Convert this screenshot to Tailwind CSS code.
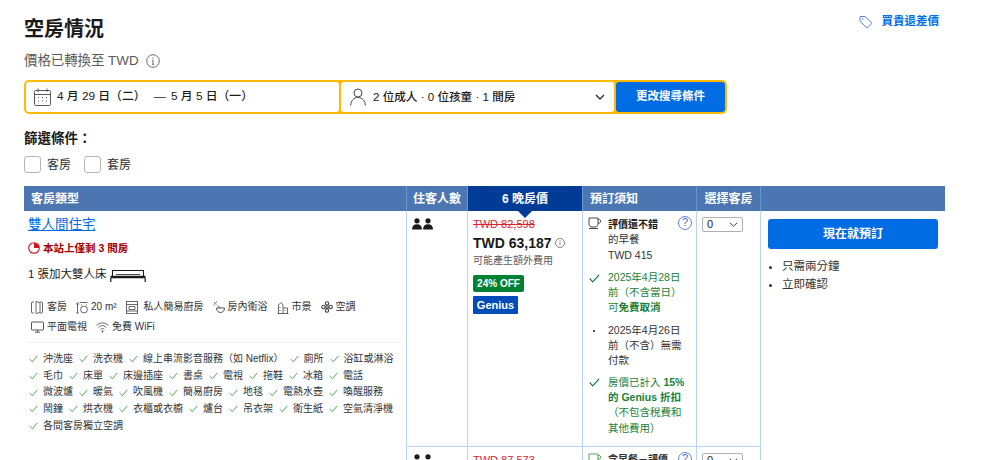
<!DOCTYPE html>
<html lang="zh-Hant">
<head>
  <meta charset="UTF-8" />
  <title>空房情況</title>
  <script src="https://cdn.jsdelivr.net/npm/@tailwindcss/browser@4"></script>
</head>
<body class="bg-white h-[460px] overflow-hidden text-[#1a1a1a] font-['Liberation_Sans','Noto_Sans_CJK_TC',sans-serif]">
  <main class="w-[921px] ml-6">

    <!-- heading -->
    <div class="flex justify-between pt-[15px] h-[51px]">
      <h1 class="text-[20px] leading-[28px] font-bold">空房情況</h1>
      <a href="#" class="flex items-center gap-[9px] h-[12px] pr-[6px] pt-[2px] text-[11.5px] font-bold text-[#006ce4]">
        <svg class="w-[14px] h-[14px]" viewBox="0 0 14 14" fill="none" stroke="#5b83d6" stroke-width="1"><path d="M1 1.5h5L13 8.2 8.2 13 1 6.4z" stroke-linejoin="round"/><circle cx="3.7" cy="4" r=".8" fill="#5b83d6" stroke="none"/></svg>
        買貴退差價
      </a>
    </div>
    <div class="flex items-center gap-[7px] h-[20px] text-[13.4px] text-[#595959]">
      價格已轉換至 TWD
      <svg class="w-[14px] h-[14px]" viewBox="0 0 14 14" fill="none" stroke="#6b6b6b"><circle cx="7" cy="7" r="6.3"/><path d="M7 6.2v4M6 10.3h2M6.2 6.2H7"/><circle cx="7" cy="3.9" r=".7" fill="#6b6b6b" stroke="none"/></svg>
    </div>

    <!-- search bar -->
    <form class="flex gap-[2px] w-[703px] h-[34px] mt-[9px] p-[2px] bg-[#febb02] rounded-[5px]">
      <div class="flex items-center w-[313px] pl-[8px] bg-white rounded-[3px] text-[11.8px] font-medium">
        <svg class="w-[17px] h-[18px] mr-[6px]" viewBox="0 0 17 18" fill="none" stroke="#4a4a4a" stroke-width=".9"><rect x=".5" y="2.5" width="16" height="15" rx="1"/><path d="M.5 6.5h16M4 .5v3.5M13 .5v3.5"/><path d="M4 9.5h2M8 9.5h2M12 9.5h2M4 13h2M8 13h2M12 13h2" stroke-dasharray="1 1"/></svg>
        <span class="w-[97px]">4 月 29 日（二）</span>
        <span class="w-[17px]">—</span>
        <span>5 月 5 日（一）</span>
      </div>
      <div class="flex items-center w-[273px] pl-[9px] pr-[9px] bg-white rounded-[3px] text-[11.6px] font-medium">
        <svg class="w-[16px] h-[18px] mr-[7px]" viewBox="0 0 16 18" fill="none" stroke="#4a4a4a" stroke-width="1"><circle cx="8" cy="5" r="4"/><path d="M.7 17.5c0-4.5 3-8 7.3-8s7.3 3.5 7.3 8"/></svg>
        <span>2 位成人 · 0 位孩童 · 1 間房</span>
        <svg class="w-[10px] h-[6px] ml-auto" viewBox="0 0 10 6" fill="none" stroke="#333" stroke-width="1.4"><path d="M1 1l4 4 4-4"/></svg>
      </div>
      <button type="button" class="w-[109px] bg-[#006ce4] rounded-[3px] text-white text-[11.5px] font-bold">更改搜尋條件</button>
    </form>

    <!-- filters -->
    <h2 class="mt-[16px] text-[13.5px] leading-[18px] font-bold">篩選條件：</h2>
    <div class="flex items-center gap-[13px] mt-[8px] h-[17px] text-[12px] text-[#333]">
      <label class="flex items-center gap-[6px]"><span class="w-[17px] h-[17px] border border-[#b5b5b5] rounded-[3px]"></span>客房</label>
      <label class="flex items-center gap-[6px]"><span class="w-[17px] h-[17px] border border-[#b5b5b5] rounded-[3px]"></span>套房</label>
    </div>

    <!-- room table -->
    <div class="grid grid-cols-[383px_61px_115px_114px_64px_184px] grid-rows-[25px_236px_60px] mt-[13px]">
      <div class="flex items-center pl-[7px] bg-[#4c76b2] border-r border-[#6b97d0] text-white text-[12px] font-bold">客房類型</div>
      <div class="flex items-center justify-center bg-[#4c76b2] border-r border-[#6b97d0] text-white text-[12px] font-bold">住客人數</div>
      <div class="relative flex items-center justify-center bg-[#003b95] border-r border-[#6b97d0] text-white text-[12px] font-bold">
        6 晚房價
        <span class="absolute top-[25px] left-[50px] z-10 border-x-[7px] border-x-transparent border-t-[7px] border-t-[#003b95]"></span>
      </div>
      <div class="flex items-center pl-[7px] bg-[#4c76b2] border-r border-[#6b97d0] text-white text-[12px] font-bold">預訂須知</div>
      <div class="flex items-center justify-center bg-[#4c76b2] border-r border-[#6b97d0] text-white text-[12px] font-bold">選擇客房</div>
      <div class="bg-[#4c76b2]"></div>

      <!-- room description -->
      <div class="row-span-2 border-r border-[#b9d3f2] pl-1 pr-[5px]">
        <a href="#" class="block mt-[4px] text-[13.5px] leading-[20px] text-[#006ce4] underline">雙人間住宅</a>
        <p class="flex items-center gap-[3px] mt-[5px] text-[10.5px] leading-[16px] font-bold text-[#a30000]">
          <svg class="w-[12px] h-[12px]" viewBox="0 0 12 12"><circle cx="6" cy="6" r="5.3" fill="none" stroke="#d4111e" stroke-width="1.1"/><path d="M6 6V.7A5.3 5.3 0 0 1 11.3 6z" fill="#d4111e"/></svg>
          本站上僅剩 3 間房
        </p>
        <p class="flex items-center gap-[3px] mt-[11px] h-[16px] text-[11.5px]">
          1 張加大雙人床
          <svg class="w-[36px] h-[13px]" viewBox="0 0 36 13" fill="none" stroke="#1a1a1a"><path d="M2.5 7V1.5h31V7" stroke-width="1.1"/><path d="M.5 8h35" stroke-width="2.4"/><path d="M.8 9v4M35.2 9v4" stroke-width="1.2"/><path d="M6 5.5h24" stroke-width=".8"/></svg>
        </p>
        <ul class="flex flex-wrap items-center gap-x-[9px] gap-y-[6px] mt-[17px] pl-[3px] text-[10px] leading-[14px] text-[#333]">
          <li class="flex items-center gap-[4px]"><svg class="w-[12px] h-[13px]" viewBox="0 0 12 13" fill="none" stroke="#444" stroke-width=".8"><path d="M3 1H1.5a1 1 0 0 0-1 1v9a1 1 0 0 0 1 1H3M9 1h1.5a1 1 0 0 1 1 1v9a1 1 0 0 1-1 1H9M5 .5l4 1v10l-4 1z"/></svg>客房</li>
          <li class="flex items-center gap-[3px]"><svg class="w-[12px] h-[13px]" viewBox="0 0 12 13" fill="none" stroke="#444" stroke-width=".8"><circle cx="8" cy="8.5" r="3.4"/><path d="M3.5 1.5h8M1.5 3v9M.3 3.5l1.2-2 1.200 2M.3 12h2.400M5.500 4.500v-1M10.500 4.500v-1"/></svg>20 m²</li>
          <li class="flex items-center gap-[6px]"><svg class="w-[12px] h-[13px]" viewBox="0 0 12 13" fill="none" stroke="#444" stroke-width=".8"><rect x=".5" y=".5" width="11" height="12"/><path d="M.5 3.5h11M.5 10h11M3 5.500h6v3H3z"/></svg>私人簡易廚房</li>
          <li class="flex items-center gap-[3px]"><svg class="w-[12px] h-[13px]" viewBox="0 0 12 13" fill="none" stroke="#444" stroke-width=".9"><path d="M3.5 7h8c0 3-2 4.500-4 4.500S3.500 10 3.500 7zM5 4.500l2 2.500M1 1l2 2.500M.5 4h1M3.500.5v1"/></svg>房內衛浴</li>
          <li class="flex items-center gap-[3px]"><svg class="w-[12px] h-[13px]" viewBox="0 0 12 13" fill="none" stroke="#444" stroke-width=".8"><path d="M.5 12.500h11M1.500 12.500V4L4 1.500 6 4v8.500M6 7h4.500v5.500M3 6v1M3 9v1M8 9v1"/></svg>市景</li>
          <li class="flex items-center gap-[3px]"><svg class="w-[12px] h-[12px]" viewBox="0 0 12 12" fill="none" stroke="#444" stroke-width="1.1"><circle cx="6" cy="6" r="1.3"/><circle cx="6" cy="2.4" r="1.7"/><circle cx="6" cy="9.6" r="1.7"/><circle cx="2.4" cy="6" r="1.7"/><circle cx="9.6" cy="6" r="1.7"/></svg>空調</li>
          <li class="flex items-center gap-[3px]"><svg class="w-[13px] h-[12px]" viewBox="0 0 13 12" fill="none" stroke="#444" stroke-width=".9"><rect x=".5" y="1" width="12" height="8" rx=".7"/><path d="M6.5 9v2M4 11.200h5"/></svg>平面電視</li>
          <li class="flex items-center gap-[3px]"><svg class="w-[13px] h-[11px]" viewBox="0 0 13 11" fill="none" stroke="#444" stroke-width=".8"><path d="M.5 3.500c3.500-3.500 8.500-3.500 12 0M2.500 5.500c2.500-2.500 5.500-2.500 8 0M4.500 7.500c1.500-1.300 2.500-1.300 4 0"/><circle cx="6.5" cy="9.5" r=".9" fill="#444" stroke="none"/></svg>免費 WiFi</li>
        </ul>
        <div class="h-px bg-[#f0f0f0] mt-[8px]"></div>
        <ul class="flex flex-wrap gap-x-[6px] mt-[8px] pl-px text-[10px] leading-[16.7px] text-[#333]">
          <li class="flex items-center gap-[5px]"><svg class="w-[9px] h-[8px]" viewBox="0 0 10 8" fill="none" stroke="#3f9a4d"><path d="M.7 4l3 3 5.5-6.5"/></svg>沖洗座</li>
          <li class="flex items-center gap-[5px]"><svg class="w-[9px] h-[8px]" viewBox="0 0 10 8" fill="none" stroke="#3f9a4d"><path d="M.7 4l3 3 5.5-6.5"/></svg>洗衣機</li>
          <li class="flex items-center gap-[5px]"><svg class="w-[9px] h-[8px]" viewBox="0 0 10 8" fill="none" stroke="#3f9a4d"><path d="M.7 4l3 3 5.5-6.5"/></svg>線上串流影音服務（如 Netflix）</li>
          <li class="flex items-center gap-[5px]"><svg class="w-[9px] h-[8px]" viewBox="0 0 10 8" fill="none" stroke="#3f9a4d"><path d="M.7 4l3 3 5.5-6.5"/></svg>廁所</li>
          <li class="flex items-center gap-[5px]"><svg class="w-[9px] h-[8px]" viewBox="0 0 10 8" fill="none" stroke="#3f9a4d"><path d="M.7 4l3 3 5.5-6.5"/></svg>浴缸或淋浴</li>
          <li class="flex items-center gap-[5px]"><svg class="w-[9px] h-[8px]" viewBox="0 0 10 8" fill="none" stroke="#3f9a4d"><path d="M.7 4l3 3 5.5-6.5"/></svg>毛巾</li>
          <li class="flex items-center gap-[5px]"><svg class="w-[9px] h-[8px]" viewBox="0 0 10 8" fill="none" stroke="#3f9a4d"><path d="M.7 4l3 3 5.5-6.5"/></svg>床單</li>
          <li class="flex items-center gap-[5px]"><svg class="w-[9px] h-[8px]" viewBox="0 0 10 8" fill="none" stroke="#3f9a4d"><path d="M.7 4l3 3 5.5-6.5"/></svg>床邊插座</li>
          <li class="flex items-center gap-[5px]"><svg class="w-[9px] h-[8px]" viewBox="0 0 10 8" fill="none" stroke="#3f9a4d"><path d="M.7 4l3 3 5.5-6.5"/></svg>書桌</li>
          <li class="flex items-center gap-[5px]"><svg class="w-[9px] h-[8px]" viewBox="0 0 10 8" fill="none" stroke="#3f9a4d"><path d="M.7 4l3 3 5.5-6.5"/></svg>電視</li>
          <li class="flex items-center gap-[5px]"><svg class="w-[9px] h-[8px]" viewBox="0 0 10 8" fill="none" stroke="#3f9a4d"><path d="M.7 4l3 3 5.5-6.5"/></svg>拖鞋</li>
          <li class="flex items-center gap-[5px]"><svg class="w-[9px] h-[8px]" viewBox="0 0 10 8" fill="none" stroke="#3f9a4d"><path d="M.7 4l3 3 5.5-6.5"/></svg>冰箱</li>
          <li class="flex items-center gap-[5px]"><svg class="w-[9px] h-[8px]" viewBox="0 0 10 8" fill="none" stroke="#3f9a4d"><path d="M.7 4l3 3 5.5-6.5"/></svg>電話</li>
          <li class="flex items-center gap-[5px]"><svg class="w-[9px] h-[8px]" viewBox="0 0 10 8" fill="none" stroke="#3f9a4d"><path d="M.7 4l3 3 5.5-6.5"/></svg>微波爐</li>
          <li class="flex items-center gap-[5px]"><svg class="w-[9px] h-[8px]" viewBox="0 0 10 8" fill="none" stroke="#3f9a4d"><path d="M.7 4l3 3 5.5-6.5"/></svg>暖氣</li>
          <li class="flex items-center gap-[5px]"><svg class="w-[9px] h-[8px]" viewBox="0 0 10 8" fill="none" stroke="#3f9a4d"><path d="M.7 4l3 3 5.5-6.5"/></svg>吹風機</li>
          <li class="flex items-center gap-[5px]"><svg class="w-[9px] h-[8px]" viewBox="0 0 10 8" fill="none" stroke="#3f9a4d"><path d="M.7 4l3 3 5.5-6.5"/></svg>簡易廚房</li>
          <li class="flex items-center gap-[5px]"><svg class="w-[9px] h-[8px]" viewBox="0 0 10 8" fill="none" stroke="#3f9a4d"><path d="M.7 4l3 3 5.5-6.5"/></svg>地毯</li>
          <li class="flex items-center gap-[5px]"><svg class="w-[9px] h-[8px]" viewBox="0 0 10 8" fill="none" stroke="#3f9a4d"><path d="M.7 4l3 3 5.5-6.5"/></svg>電熱水壺</li>
          <li class="flex items-center gap-[5px]"><svg class="w-[9px] h-[8px]" viewBox="0 0 10 8" fill="none" stroke="#3f9a4d"><path d="M.7 4l3 3 5.5-6.5"/></svg>喚醒服務</li>
          <li class="flex items-center gap-[5px]"><svg class="w-[9px] h-[8px]" viewBox="0 0 10 8" fill="none" stroke="#3f9a4d"><path d="M.7 4l3 3 5.5-6.5"/></svg>鬧鐘</li>
          <li class="flex items-center gap-[5px]"><svg class="w-[9px] h-[8px]" viewBox="0 0 10 8" fill="none" stroke="#3f9a4d"><path d="M.7 4l3 3 5.5-6.5"/></svg>烘衣機</li>
          <li class="flex items-center gap-[5px]"><svg class="w-[9px] h-[8px]" viewBox="0 0 10 8" fill="none" stroke="#3f9a4d"><path d="M.7 4l3 3 5.5-6.5"/></svg>衣櫃或衣櫥</li>
          <li class="flex items-center gap-[5px]"><svg class="w-[9px] h-[8px]" viewBox="0 0 10 8" fill="none" stroke="#3f9a4d"><path d="M.7 4l3 3 5.5-6.5"/></svg>爐台</li>
          <li class="flex items-center gap-[5px]"><svg class="w-[9px] h-[8px]" viewBox="0 0 10 8" fill="none" stroke="#3f9a4d"><path d="M.7 4l3 3 5.5-6.5"/></svg>吊衣架</li>
          <li class="flex items-center gap-[5px]"><svg class="w-[9px] h-[8px]" viewBox="0 0 10 8" fill="none" stroke="#3f9a4d"><path d="M.7 4l3 3 5.5-6.5"/></svg>衛生紙</li>
          <li class="flex items-center gap-[5px]"><svg class="w-[9px] h-[8px]" viewBox="0 0 10 8" fill="none" stroke="#3f9a4d"><path d="M.7 4l3 3 5.5-6.5"/></svg>空氣清淨機</li>
          <li class="flex items-center gap-[5px]"><svg class="w-[9px] h-[8px]" viewBox="0 0 10 8" fill="none" stroke="#3f9a4d"><path d="M.7 4l3 3 5.5-6.5"/></svg>各間客房獨立空調</li>
        </ul>
      </div>

      <!-- guests, first rate -->
      <div class="border-r border-b border-[#b9d3f2] pl-[5px] pt-[7px]">
        <svg class="w-[21px] h-[12px]" viewBox="0 0 21 12" fill="#1a1a1a"><circle cx="5" cy="2.8" r="2.6"/><path d="M0 11.500c0-3.500 2-5.300 5-5.300s5 1.800 5 5.300z"/><circle cx="16" cy="2.8" r="2.6"/><path d="M11 11.500c0-3.500 2-5.300 5-5.300s5 1.800 5 5.300z"/></svg>
      </div>

      <!-- price -->
      <div class="border-r border-b border-[#b9d3f2] pl-[5px]">
        <p class="mt-[5px] text-[11px] leading-[16px] text-[#e0242f] line-through">TWD 82,598</p>
        <p class="flex items-center gap-[3px] mt-[1px] text-[14px] leading-[20px] font-bold">TWD 63,187
          <svg class="w-[10px] h-[10px]" viewBox="0 0 10 10" fill="none" stroke="#666" stroke-width=".8"><circle cx="5" cy="5" r="4.5"/><path d="M5 4.300v3"/><circle cx="5" cy="2.8" r=".6" fill="#666" stroke="none"/></svg>
        </p>
        <p class="mt-[1px] text-[10px] leading-[14px] text-[#595959]">可能產生額外費用</p>
        <span class="block w-[51px] mt-[7px] rounded-[2px] bg-[#008234] text-center text-white text-[10px] leading-[17px] font-bold">24% OFF</span>
        <span class="block w-[45px] mt-[4px] rounded-[1px] bg-[#004cb8] text-center text-white text-[11px] leading-[18px] font-bold">Genius</span>
      </div>

      <!-- conditions -->
      <div class="border-r border-b border-[#b9d3f2] text-[10.5px] leading-[15.3px]">
        <div class="relative flex pl-[5px] pt-[6px]">
          <svg class="w-[14px] h-[12px] mr-[6px] shrink-0" viewBox="0 0 14 12" fill="none" stroke="#333" stroke-width=".9"><path d="M1 1h9v6c0 2-1.500 3-3 3H4C2.500 10 1 9 1 7zM10 2.500h1.500c1.500 0 1.500 3.500 0 3.500H10M1 11.500h9"/></svg>
          <div>
            <p class="font-bold text-[10px]">評價還不錯</p>
            <p class="text-[#333]">的早餐</p>
            <p class="text-[#333]">TWD 415</p>
          </div>
          <span class="absolute top-[5px] right-[4px] flex items-center justify-center w-[14px] h-[14px] rounded-full border border-[#5b83d6] text-[11px] text-[#3f6fd1]">?</span>
        </div>
        <div class="flex pl-[6px] mt-[7px] text-[#1a7f37]">
          <svg class="w-[11px] h-[9px] mr-[8px] mt-[4px] shrink-0" viewBox="0 0 11 9" fill="none" stroke="#1a7f37" stroke-width="1.2"><path d="M.7 4.500l3 3.300 6.500-7"/></svg>
          <div>
            <p>2025年4月28日</p>
            <p>前（不含當日）</p>
            <p>可<span class="font-bold">免費取消</span></p>
          </div>
        </div>
        <div class="flex pl-[10px] mt-[7px] text-[#333]">
          <span class="w-[2px] h-[2px] mt-[7px] mr-[13px] rounded-full bg-[#1a1a1a] shrink-0"></span>
          <p class="w-[78px]">2025年4月26日前（不含）無需付款</p>
        </div>
        <div class="flex pl-[6px] mt-[6px] text-[#1a7f37]">
          <svg class="w-[11px] h-[9px] mr-[8px] mt-[3px] shrink-0" viewBox="0 0 11 9" fill="none" stroke="#1a7f37" stroke-width="1.2"><path d="M.7 4.500l3 3.300 6.500-7"/></svg>
          <div class="w-[80px]">
            <p>房價已計入 <b>15%</b></p>
            <p class="font-bold">的 Genius 折扣</p>
            <p>（不包含稅費和其他費用）</p>
          </div>
        </div>
      </div>

      <!-- select -->
      <div class="border-r border-b border-[#b9d3f2] pl-[5px] pt-[6px]">
        <div class="flex items-center justify-between w-[41px] h-[15px] px-[4px] border border-[#b0b0b0] rounded-[2px] text-[11px]">
          0
          <svg class="w-[9px] h-[5px]" viewBox="0 0 9 5" fill="none" stroke="#444"><path d="M.7.7l3.800 3.500L8.300.7"/></svg>
        </div>
      </div>

      <!-- reserve -->
      <div class="row-span-2 pl-[7px]">
        <button type="button" class="block w-[170px] h-[30px] mt-[8px] rounded-[3px] bg-[#006ce4] text-white text-[12px] font-bold">現在就預訂</button>
        <ul class="mt-[8px] pl-[14px] text-[11.5px] leading-[18px] text-[#333] list-disc">
          <li>只需兩分鐘</li>
          <li>立即確認</li>
        </ul>
      </div>

      <!-- second rate, cut off by the window -->
      <div class="border-r border-[#b9d3f2] pl-[5px] pt-[7px]">
        <svg class="w-[21px] h-[12px]" viewBox="0 0 21 12" fill="#1a1a1a"><circle cx="5" cy="2.8" r="2.6"/><path d="M0 11.500c0-3.500 2-5.300 5-5.300s5 1.800 5 5.300z"/><circle cx="16" cy="2.8" r="2.6"/><path d="M11 11.500c0-3.500 2-5.300 5-5.300s5 1.800 5 5.300z"/></svg>
      </div>
      <div class="border-r border-[#b9d3f2] pl-[5px]">
        <p class="mt-[5px] text-[11px] leading-[16px] text-[#e0242f] line-through">TWD 87,573</p>
      </div>
      <div class="relative flex border-r border-[#b9d3f2] pl-[5px] pt-[5px] text-[10.5px] leading-[15.3px]">
        <svg class="w-[14px] h-[12px] mr-[6px] mt-[1px] shrink-0" viewBox="0 0 14 12" fill="none" stroke="#3f9a4d" stroke-width=".9"><path d="M1 1h9v6c0 2-1.500 3-3 3H4C2.500 10 1 9 1 7zM10 2.500h1.500c1.500 0 1.500 3.500 0 3.500H10M1 11.500h9"/></svg>
        <p class="font-bold text-[10px] text-[#333]">含早餐－評價</p>
        <span class="absolute top-[5px] right-[4px] flex items-center justify-center w-[14px] h-[14px] rounded-full border border-[#5b83d6] text-[11px] text-[#3f6fd1]">?</span>
      </div>
      <div class="border-r border-[#b9d3f2] pl-[5px] pt-[6px]">
        <div class="flex items-center justify-between w-[41px] h-[15px] px-[4px] border border-[#b0b0b0] rounded-[2px] text-[11px]">
          0
          <svg class="w-[9px] h-[5px]" viewBox="0 0 9 5" fill="none" stroke="#444"><path d="M.7.7l3.800 3.500L8.300.7"/></svg>
        </div>
      </div>
    </div>
  </main>
</body>
</html>
